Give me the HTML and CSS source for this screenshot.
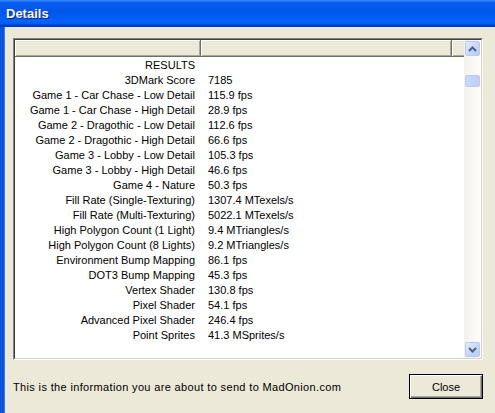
FILE: index.html
```html
<!DOCTYPE html>
<html>
<head>
<meta charset="utf-8">
<link rel="stylesheet" href="styles.css">
</head>
<body>
<div class="window">
  <div class="titlebar"><span class="title">Details</span></div>
  <div class="frame">
    <div class="content">
      <div class="listbox">
        <div class="listinner">
          <div class="listmain">
            <div class="header">
              <div class="hcell c1"></div>
              <div class="hcell c2"></div>
              <div class="hcell c3"></div>
            </div>
            <div class="rows">
              <div class="row"><span class="k">RESULTS</span><span class="v"></span></div>
              <div class="row"><span class="k">3DMark Score</span><span class="v">7185</span></div>
              <div class="row"><span class="k">Game 1 - Car Chase - Low Detail</span><span class="v">115.9 fps</span></div>
              <div class="row"><span class="k">Game 1 - Car Chase - High Detail</span><span class="v">28.9 fps</span></div>
              <div class="row"><span class="k">Game 2 - Dragothic - Low Detail</span><span class="v">112.6 fps</span></div>
              <div class="row"><span class="k">Game 2 - Dragothic - High Detail</span><span class="v">66.6 fps</span></div>
              <div class="row"><span class="k">Game 3 - Lobby - Low Detail</span><span class="v">105.3 fps</span></div>
              <div class="row"><span class="k">Game 3 - Lobby - High Detail</span><span class="v">46.6 fps</span></div>
              <div class="row"><span class="k">Game 4 - Nature</span><span class="v">50.3 fps</span></div>
              <div class="row"><span class="k">Fill Rate (Single-Texturing)</span><span class="v">1307.4 MTexels/s</span></div>
              <div class="row"><span class="k">Fill Rate (Multi-Texturing)</span><span class="v">5022.1 MTexels/s</span></div>
              <div class="row"><span class="k">High Polygon Count (1 Light)</span><span class="v">9.4 MTriangles/s</span></div>
              <div class="row"><span class="k">High Polygon Count (8 Lights)</span><span class="v">9.2 MTriangles/s</span></div>
              <div class="row"><span class="k">Environment Bump Mapping</span><span class="v">86.1 fps</span></div>
              <div class="row"><span class="k">DOT3 Bump Mapping</span><span class="v">45.3 fps</span></div>
              <div class="row"><span class="k">Vertex Shader</span><span class="v">130.8 fps</span></div>
              <div class="row"><span class="k">Pixel Shader</span><span class="v">54.1 fps</span></div>
              <div class="row"><span class="k">Advanced Pixel Shader</span><span class="v">246.4 fps</span></div>
              <div class="row"><span class="k">Point Sprites</span><span class="v">41.3 MSprites/s</span></div>
            </div>
          </div>
          <div class="scrollbar">
            <div class="sbtn">
              <svg width="9" height="6" viewBox="0 0 9 6"><path d="M1 5 L4.5 1.5 L8 5" fill="none" stroke="#4D6185" stroke-width="2"/></svg>
            </div>
            <div class="track">
              <div class="thumb"></div>
            </div>
            <div class="sbtn">
              <svg width="9" height="6" viewBox="0 0 9 6"><path d="M1 1 L4.5 4.5 L8 1" fill="none" stroke="#4D6185" stroke-width="2"/></svg>
            </div>
          </div>
        </div>
      </div>
      <div class="footer">
        <span class="info">This is the information you are about to send to MadOnion.com</span>
        <button class="close">Close</button>
      </div>
    </div>
  </div>
</div>
</body>
</html>
```

FILE: styles.css
```css
html, body {
  margin: 0;
  padding: 0;
  background: #ECE9D8;
}
.window {
  width: 495px;
  height: 413px;
  overflow: hidden;
  background: #ECE9D8;
  display: flex;
  flex-direction: column;
}
.titlebar {
  height: 27px;
  flex: none;
  background: linear-gradient(to bottom, #3A8CFF 0%, #0A5CF0 10%, #0056EA 45%, #0064FA 80%, #005CF2 88%, #0042D2 92%, #0036C4 100%);
  display: flex;
  align-items: center;
  padding-left: 6px;
  padding-bottom: 1px;
  box-sizing: border-box;
}
.title {
  font-family: "Liberation Sans", Arial, sans-serif;
  font-weight: bold;
  font-size: 13px;
  color: #fff;
  text-shadow: 1px 1px 0 #0A1883;
}
.frame {
  flex: 1;
  display: flex;
  border-left: 4px solid #0A52E0;
  box-shadow: inset 1px 0 0 #3D7BF0;
}
.content {
  flex: 1;
  padding: 11px 0 0 9px;
  display: flex;
  flex-direction: column;
}
.listbox {
  width: 470px;
  height: 322px;
  box-sizing: border-box;
  border: 1px solid;
  border-color: #808080 #FFFFFF #FFFFFF #808080;
}
.listinner {
  height: 100%;
  box-sizing: border-box;
  border: 1px solid;
  border-color: #404040 #D4D0C8 #D4D0C8 #404040;
  background: #fff;
  display: flex;
}
.listmain {
  flex: 1;
  display: flex;
  flex-direction: column;
  overflow: hidden;
}
.header {
  height: 17px;
  flex: none;
  display: flex;
  background: #ECE9D8;
  border-bottom: 1px solid #716F64;
  box-sizing: border-box;
}
.hcell {
  height: 100%;
  box-sizing: border-box;
  border-right: 1px solid #716F64;
  box-shadow: inset 1px 1px 0 #FFFFFF, inset -1px -1px 0 #ACA899;
}
.hcell.c1 { width: 186px; }
.hcell.c2 { width: 251px; }
.hcell.c3 { flex: 1; border-right: none; box-shadow: inset 1px 1px 0 #FFFFFF, inset 0 -1px 0 #ACA899; }
.rows {
  padding-top: 1px;
  font-family: "Liberation Sans", Arial, sans-serif;
  font-size: 11px;
  color: #000;
}
.row {
  height: 15px;
  line-height: 15px;
  display: flex;
  white-space: nowrap;
}
.k {
  width: 186px;
  flex: none;
  text-align: right;
  padding-right: 6px;
  box-sizing: border-box;
}
.v {
  padding-left: 7px;
}
.scrollbar {
  width: 17px;
  flex: none;
  display: flex;
  flex-direction: column;
  background: linear-gradient(to right, #F3F1EC, #FEFEFB);
}
.sbtn {
  width: 15px;
  height: 15px;
  margin: 1px;
  box-sizing: border-box;
  border: 1px solid #B7CBF5;
  border-radius: 2px;
  background: linear-gradient(135deg, #E4EBFD 0%, #C5D5FB 60%, #B7CAF8 100%);
  display: flex;
  align-items: center;
  justify-content: center;
  flex: none;
}
.track {
  flex: 1;
  padding-top: 18px;
}
.thumb {
  width: 15px;
  height: 12px;
  margin-left: 1px;
  box-sizing: border-box;
  border: 1px solid #B7CBF5;
  border-radius: 2px;
  background: linear-gradient(to right, #C9D8FC, #BCCFFA);
}
.footer {
  display: flex;
  align-items: center;
  justify-content: space-between;
  width: 470px;
  margin-top: 14px;
}
.info {
  font-family: "Liberation Sans", Arial, sans-serif;
  font-size: 11px;
  letter-spacing: 0.35px;
  color: #000;
}
.close {
  width: 74px;
  height: 25px;
  margin: 0;
  padding: 0;
  background: #ECE9D8;
  border: 1px solid #000;
  box-shadow: inset 1px 1px 0 #FFFFFF, inset -1px -1px 0 #716F64, inset -2px -2px 0 #ACA899;
  font-family: "Liberation Sans", Arial, sans-serif;
  font-size: 11px;
  color: #000;
}
```
